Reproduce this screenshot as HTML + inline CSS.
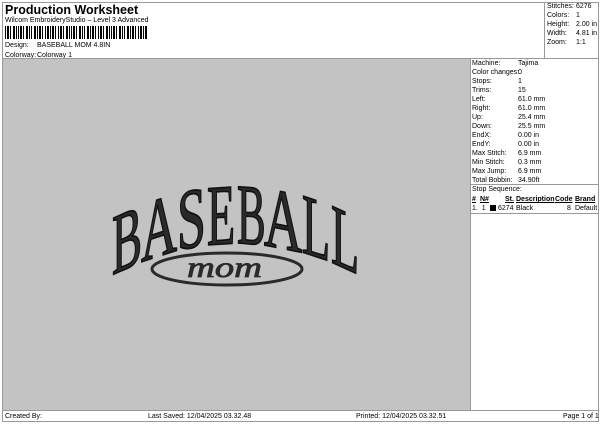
<!DOCTYPE html>
<html><head><meta charset="utf-8"><style>
*{margin:0;padding:0;box-sizing:border-box}
body{width:600px;height:424px;background:#fff;position:relative;font-family:"Liberation Sans",Arial,sans-serif;font-size:7px;color:#000;overflow:hidden}
.a{position:absolute;white-space:nowrap;line-height:9px}
.frame{position:absolute;left:2px;top:2px;width:597px;height:420px;border:1px solid #999}
</style></head><body>
<div class="frame"></div>
<div class="a" style="left:5px;top:3px;font-size:12.5px;font-weight:bold;line-height:14px">Production Worksheet</div>
<div class="a" style="left:5px;top:16px">Wilcom EmbroideryStudio – Level 3 Advanced</div>
<svg class="a" style="left:5px;top:26px" width="142" height="13">
<g fill="#000">
<rect x="0" width="1" height="13"/><rect x="2" width="2" height="13"/><rect x="5" width="1" height="13"/><rect x="8" width="2" height="13"/><rect x="11" width="1" height="13"/><rect x="13" width="1" height="13"/><rect x="15" width="2" height="13"/><rect x="18" width="1" height="13"/><rect x="21" width="2" height="13"/><rect x="24" width="1" height="13"/><rect x="26" width="1" height="13"/><rect x="29" width="2" height="13"/><rect x="32" width="1" height="13"/><rect x="34" width="2" height="13"/><rect x="37" width="1" height="13"/><rect x="40" width="1" height="13"/><rect x="42" width="2" height="13"/><rect x="45" width="1" height="13"/><rect x="47" width="2" height="13"/><rect x="50" width="1" height="13"/><rect x="53" width="1" height="13"/><rect x="55" width="2" height="13"/><rect x="58" width="1" height="13"/><rect x="61" width="2" height="13"/><rect x="64" width="1" height="13"/><rect x="66" width="1" height="13"/><rect x="68" width="2" height="13"/><rect x="71" width="1" height="13"/><rect x="74" width="2" height="13"/><rect x="77" width="1" height="13"/><rect x="79" width="1" height="13"/><rect x="82" width="2" height="13"/><rect x="85" width="1" height="13"/><rect x="87" width="2" height="13"/><rect x="90" width="1" height="13"/><rect x="93" width="1" height="13"/><rect x="95" width="2" height="13"/><rect x="98" width="1" height="13"/><rect x="101" width="2" height="13"/><rect x="104" width="1" height="13"/><rect x="106" width="1" height="13"/><rect x="108" width="2" height="13"/><rect x="111" width="1" height="13"/><rect x="114" width="2" height="13"/><rect x="117" width="1" height="13"/><rect x="119" width="1" height="13"/><rect x="122" width="2" height="13"/><rect x="125" width="1" height="13"/><rect x="127" width="2" height="13"/><rect x="130" width="1" height="13"/><rect x="133" width="1" height="13"/><rect x="135" width="2" height="13"/><rect x="138" width="1" height="13"/><rect x="140" width="2" height="13"/>
</g></svg>
<div class="a" style="left:5px;top:41px">Design:</div><div class="a" style="left:37px;top:41px">BASEBALL MOM 4.8IN</div>
<div class="a" style="left:5px;top:51px">Colorway:</div><div class="a" style="left:37px;top:51px">Colorway 1</div>
<div style="position:absolute;left:544px;top:2px;width:1px;height:56px;background:#999"></div>
<div class="a" style="left:547px;top:2px;line-height:9px">Stitches:<br>Colors:<br>Height:<br>Width:<br>Zoom:</div>
<div class="a" style="left:576px;top:2px;line-height:9px">6276<br>1<br>2.00 in<br>4.81 in<br>1:1</div>
<div style="position:absolute;left:2px;top:58px;width:597px;height:1px;background:#999"></div>
<div style="position:absolute;left:3px;top:59px;width:467px;height:351px;background:#c3c3c3"></div>
<div style="position:absolute;left:470px;top:59px;width:1px;height:351px;background:#999"></div>
<svg class="a" style="left:0;top:0" width="470" height="410">
<g font-family="Liberation Serif,serif" font-size="100" fill="#2a2a2a" stroke="#111" stroke-width="2">
<text transform="translate(112,275) skewY(-24) scale(0.45,0.86)">B</text>
<text transform="translate(141,262) skewY(-18) scale(0.50,0.86)">A</text>
<text transform="translate(177,250) skewY(-10.5) scale(0.52,0.86)">S</text>
<text transform="translate(207,245) skewY(-3.6) scale(0.46,0.86)">E</text>
<text transform="translate(237,243) skewY(3.7) scale(0.43,0.86)">B</text>
<text transform="translate(264,245) skewY(11) scale(0.53,0.86)">A</text>
<text transform="translate(302,252) skewY(18.4) scale(0.46,0.86)">L</text>
<text transform="translate(331,262) skewY(24.4) scale(0.46,0.86)">L</text>
</g>
<ellipse cx="227" cy="269" rx="75" ry="16" fill="none" stroke="#2a2a2a" stroke-width="3"/>
<text x="187" y="277" textLength="75" lengthAdjust="spacingAndGlyphs" font-family="Liberation Serif,serif" font-style="italic" font-size="30" fill="#2a2a2a" stroke="#2a2a2a" stroke-width=".8">mom</text>
</svg>
<div class="a" style="left:472px;top:59px;line-height:9px">Machine:<br>Color changes:<br>Stops:<br>Trims:<br>Left:<br>Right:<br>Up:<br>Down:<br>EndX:<br>EndY:<br>Max Stitch:<br>Min Stitch:<br>Max Jump:<br>Total Bobbin:</div>
<div class="a" style="left:518px;top:59px;line-height:9px">Tajima<br>0<br>1<br>15<br>61.0 mm<br>61.0 mm<br>25.4 mm<br>25.5 mm<br>0.00 in<br>0.00 in<br>6.9 mm<br>0.3 mm<br>6.9 mm<br>34.90ft</div>
<div style="position:absolute;left:471px;top:184px;width:128px;height:1px;background:#999"></div>
<div class="a" style="left:472px;top:185px">Stop Sequence:</div>
<div class="a" style="left:472px;top:195px;font-weight:bold;text-decoration:underline">#</div>
<div class="a" style="left:480px;top:195px;font-weight:bold;text-decoration:underline">N#</div>
<div class="a" style="left:505px;top:195px;font-weight:bold;text-decoration:underline">St.</div>
<div class="a" style="left:516px;top:195px;font-weight:bold;text-decoration:underline">Description</div>
<div class="a" style="left:555px;top:195px;font-weight:bold;text-decoration:underline">Code</div>
<div class="a" style="left:575px;top:195px;font-weight:bold;text-decoration:underline">Brand</div>
<div class="a" style="left:472px;top:204px">1.&nbsp; 1</div>
<div style="position:absolute;left:490px;top:205px;width:6px;height:6px;background:#000"></div>
<div class="a" style="left:498px;top:204px">6274</div>
<div class="a" style="left:516px;top:204px">Black</div>
<div class="a" style="left:567px;top:204px">8</div>
<div class="a" style="left:575px;top:204px">Default</div>
<div style="position:absolute;left:471px;top:213px;width:128px;height:1px;background:#999"></div>
<div style="position:absolute;left:2px;top:410px;width:597px;height:1px;background:#999"></div>
<div class="a" style="left:5px;top:412px">Created By:</div>
<div class="a" style="left:148px;top:412px">Last Saved: 12/04/2025 03.32.48</div>
<div class="a" style="left:356px;top:412px">Printed: 12/04/2025 03.32.51</div>
<div class="a" style="left:563px;top:412px">Page 1 of 1</div>
</body></html>
